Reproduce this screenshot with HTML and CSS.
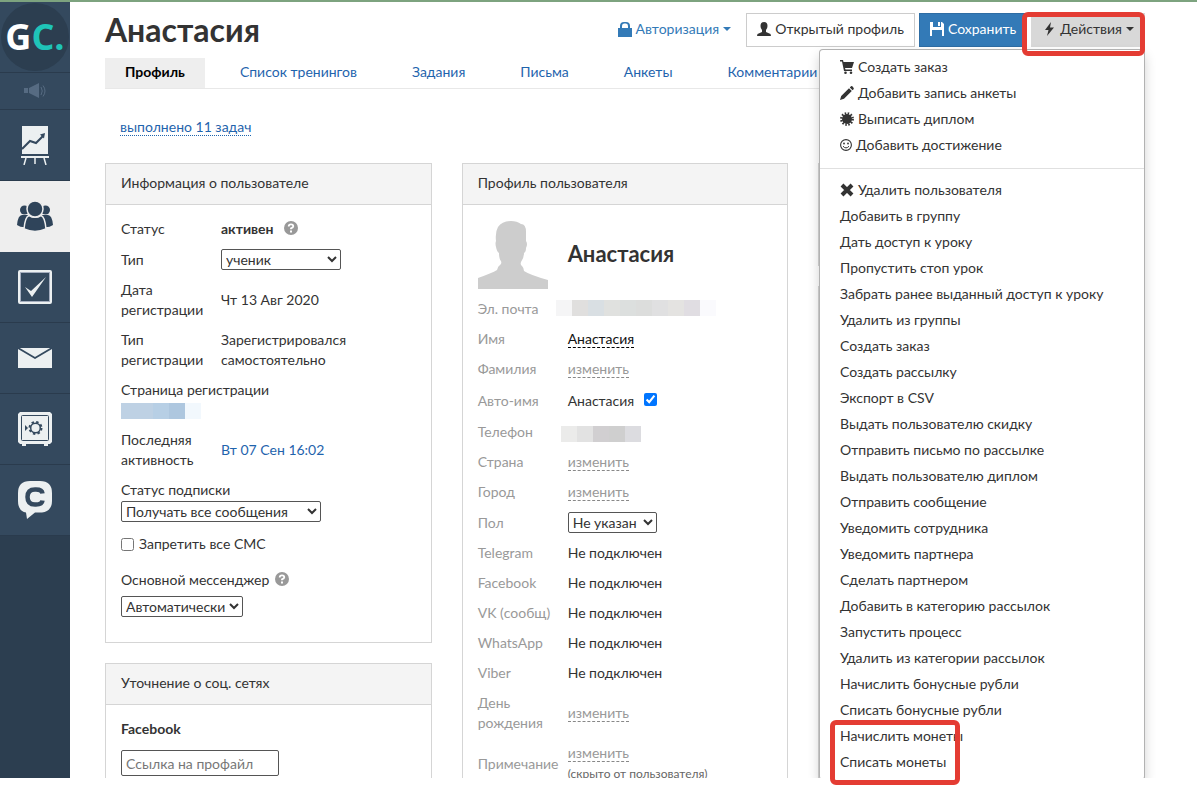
FILE: index.html
```html
<!DOCTYPE html>
<html lang="ru">
<head>
<meta charset="utf-8">
<meta name="viewport" content="width=device-width, initial-scale=1">
<title>Анастасия — профиль</title>
<link rel="stylesheet" href="styles.css">
</head>
<body>
<div class="app">
  <nav class="sidebar" aria-label="Главное меню">
    <a class="logo" href="#"><span class="logo-circle"><span>G<span class="logo-accent">C.</span></span></span></a>
    <a class="side-item side-small" href="#" aria-label="Новости">
      <svg width="22" height="16" viewBox="0 0 22 16" fill="#566b82"><path d="M0 5h4v5H0zM5 5l10-5v15l-10-5z"/><path d="M17 4q2.500 4 0 8M19 2.500q4 5.500 0 11" fill="none" stroke="#566b82"/></svg>
    </a>
    <a class="side-item" href="#" aria-label="Обучение">
      <svg width="28" height="40" viewBox="0 0 28 40"><path fill="#ecf0f1" d="M1 1h26v28H1zM0 31h28v2H0z"/><path d="M5 33l-2 7M14 33v6M23 33l2 7" stroke="#ecf0f1" stroke-width="1.500"/><path d="M1 24l8-8 6 2 7-7" fill="none" stroke="#34495e" stroke-width="2"/><path fill="#34495e" d="M19 9.500l5-1.500-1 5.500z"/></svg>
    </a>
    <a class="side-item side-active" href="#" aria-label="Пользователи">
      <svg width="36" height="31" viewBox="0 0 36 31" fill="#2f445a"><circle cx="7.500" cy="9" r="4.500"/><circle cx="28.500" cy="9" r="4.500"/><path d="M0 24Q1 14 5 14h6v12Q4 27 0 24zM36 24Q35 14 31 14h-6v12q7 1 11-2z"/><g stroke="#eee" stroke-width="1.500"><path d="M7 28q1-12 5-13.500 6 3.500 12 0Q28 16 29 28q-11 5-22 0z"/><circle cx="18" cy="8" r="8"/></g></svg>
    </a>
    <a class="side-item" href="#" aria-label="Задачи">
      <svg width="34" height="34" viewBox="0 0 34 34"><rect x="1" y="1" width="32" height="32" rx="1" fill="none" stroke="#ecf0f1" stroke-width="2"/><rect x="2.500" y="2.500" width="29" height="29" fill="none" stroke="#a5aebf"/><path fill="#ecf0f1" d="M7 17l6 4L28 7 14 27z"/></svg>
    </a>
    <a class="side-item" href="#" aria-label="Сообщения">
      <svg width="34" height="20" viewBox="0 0 34 20"><path fill="#ecf0f1" d="M1 0h32l1 1v19H0V1z"/><path d="M0 0l17 10L34 0" fill="none" stroke="#34495e" stroke-width="1.800"/></svg>
    </a>
    <a class="side-item" href="#" aria-label="Продажи">
      <svg width="34" height="34" viewBox="0 0 34 34"><path fill="#ecf0f1" d="M2 0h30l2 2v28l-2 2h-2v2h-4v-2H8v2H4v-2H2l-2-2V2z"/><rect x="3.500" y="3.500" width="27" height="25" rx="1" fill="none" stroke="#34495e"/><circle cx="17.500" cy="16" r="4.800" fill="none" stroke="#34495e" stroke-width="1.500"/><circle cx="17.500" cy="16" r="6" fill="none" stroke="#34495e" stroke-width="2" stroke-dasharray="2.400 2.310"/><path fill="#34495e" d="M7 13l3 3-3 3z"/></svg>
    </a>
    <a class="side-item" href="#" aria-label="Чат">
      <svg width="34" height="38" viewBox="0 0 34 38"><path fill="#ecf0f1" d="M12 0h10q12 0 12 12v8q0 10-10 11.500h-7L9 38l-1-6.500Q0 30 0 20v-8Q0 0 12 0z"/><path d="M24.500 12.500Q24 8.500 18 8.500h-1q-7.500 0-7.500 7.500t7.500 7.500h1q6 0 6.500-4" fill="none" stroke="#34495e" stroke-width="4.500"/></svg>
    </a>
  </nav>

  <main class="main">
    <header class="header">
      <h1 class="title">Анастасия</h1>
      <div class="toolbar">
        <button class="btn btn-link" type="button">
          <svg width="14" height="15" viewBox="0 0 14 15"><path fill="currentColor" d="M0 6h2V4q0-4 4-4h2q4 0 4 4v2h2v9H0zM4 6h6V4Q10 1.500 8 1.500H6Q4 1.500 4 4z"/></svg>
          Авторизация<span class="caret"></span>
        </button>
        <button class="btn btn-default" type="button">
          <svg width="14" height="14" viewBox="0 0 14 14"><path fill="currentColor" d="M7 0q3.500 0 3.500 4 0 2.500-1.500 4v2l4.500 2 .5 2H0l.5-2L5 10V8Q3.500 6.500 3.500 4 3.500 0 7 0z"/></svg>
          Открытый профиль
        </button>
        <button class="btn btn-primary" type="button">
          <svg width="14" height="14" viewBox="0 0 14 14"><path fill="currentColor" d="M0 0h3v5h8V0h1l2 2v12h-2V8H2v6H0zM8 0h2v4H8z"/></svg>
          Сохранить
        </button>
        <div class="dropdown">
          <button class="btn btn-open" type="button" aria-expanded="true">
            <svg width="14" height="14" viewBox="0 0 14 14"><path fill="currentColor" d="M9 0L3 8h3.500L5 14l7-8.500H8z"/></svg>
            Действия<span class="caret"></span>
          </button>
          <ul class="menu">
            <li><a href="#"><svg width="14" height="14" viewBox="0 0 14 14"><path fill="currentColor" d="M0 0h3l.5 2H14l-2 6H5l.5 1.500H12V11H4L2 1.500H0z"/><circle cx="5.500" cy="12.700" r="1.300" fill="currentColor"/><circle cx="11" cy="12.700" r="1.300" fill="currentColor"/></svg>Создать заказ</a></li>
            <li><a href="#"><svg width="14" height="14" viewBox="0 0 14 14"><path fill="currentColor" d="M0 14l1.200-4L9 2.200 11.800 5 4 12.800zM9.800 1.400L11 .2q1-.5 2 .8t.8 2l-1.200 1.200z"/></svg>Добавить запись анкеты</a></li>
            <li><a href="#"><svg width="14" height="14" viewBox="0 0 14 14"><circle cx="7" cy="7" r="5" fill="currentColor"/><circle cx="7" cy="7" r="5.700" fill="none" stroke="currentColor" stroke-width="2.400" stroke-dasharray="1.500 1.484"/></svg>Выписать диплом</a></li>
            <li><a href="#"><svg width="12" height="12" viewBox="0 0 12 12"><circle cx="6" cy="6" r="5.400" fill="none" stroke="currentColor" stroke-width="1.100"/><circle cx="4" cy="4.500" r=".9" fill="currentColor"/><circle cx="8" cy="4.500" r=".9" fill="currentColor"/><path d="M3 7.200q3 3.400 6 0" fill="none" stroke="currentColor"/></svg>Добавить достижение</a></li>
            <li class="menu-divider"></li>
            <li><a href="#"><svg width="14" height="14" viewBox="0 0 14 14"><path d="M2 2l10 10M12 2L2 12" stroke="currentColor" stroke-width="4"/></svg>Удалить пользователя</a></li>
            <li><a href="#">Добавить в группу</a></li>
            <li><a href="#">Дать доступ к уроку</a></li>
            <li><a href="#">Пропустить стоп урок</a></li>
            <li><a href="#">Забрать ранее выданный доступ к уроку</a></li>
            <li><a href="#">Удалить из группы</a></li>
            <li><a href="#">Создать заказ</a></li>
            <li><a href="#">Создать рассылку</a></li>
            <li><a href="#">Экспорт в CSV</a></li>
            <li><a href="#">Выдать пользователю скидку</a></li>
            <li><a href="#">Отправить письмо по рассылке</a></li>
            <li><a href="#">Выдать пользователю диплом</a></li>
            <li><a href="#">Отправить сообщение</a></li>
            <li><a href="#">Уведомить сотрудника</a></li>
            <li><a href="#">Уведомить партнера</a></li>
            <li><a href="#">Сделать партнером</a></li>
            <li><a href="#">Добавить в категорию рассылок</a></li>
            <li><a href="#">Запустить процесс</a></li>
            <li><a href="#">Удалить из категории рассылок</a></li>
            <li><a href="#">Начислить бонусные рубли</a></li>
            <li><a href="#">Списать бонусные рубли</a></li>
            <li><a href="#">Начислить монеты</a></li>
            <li><a href="#">Списать монеты</a></li>
          </ul>
        </div>
      </div>
    </header>

    <nav class="tabs" aria-label="Разделы профиля">
      <a class="tab tab-active" href="#">Профиль</a>
      <a class="tab" href="#">Список тренингов</a>
      <a class="tab" href="#">Задания</a>
      <a class="tab" href="#">Письма</a>
      <a class="tab" href="#">Анкеты</a>
      <a class="tab" href="#">Комментарии</a>
    </nav>

    <p class="tasks"><a href="#">выполнено 11 задач</a></p>

    <div class="columns">
      <div class="column">
        <section class="panel">
          <h2 class="panel-head">Информация о пользователе</h2>
          <div class="panel-body">
            <table class="info">
              <tr><th>Статус</th><td><b>активен</b><span class="help"><svg width="14" height="14" viewBox="0 0 14 14"><circle cx="7" cy="7" r="7" fill="#999"/><path d="M4.700 5.500Q4.700 3.300 7 3.300t2.300 2Q9.300 6.500 7 7.300v1" fill="none" stroke="#fff" stroke-width="1.800"/><path fill="#fff" d="M6 9.500h2v2H6z"/></svg></span></td></tr>
              <tr><th><label for="type">Тип</label></th><td><select id="type" class="select-md"><option>ученик</option></select></td></tr>
              <tr><th>Дата регистрации</th><td>Чт 13 Авг 2020</td></tr>
              <tr><th>Тип регистрации</th><td>Зарегистрировался самостоятельно</td></tr>
              <tr><th colspan="2">Страница регистрации<span class="mask mask-page"></span></th></tr>
              <tr><th>Последняя активность</th><td><a href="#">Вт 07 Сен 16:02</a></td></tr>
            </table>
            <div class="field">
              <label for="sub">Статус подписки</label>
              <select id="sub" class="select-lg"><option>Получать все сообщения</option></select>
            </div>
            <label class="check"><input type="checkbox">Запретить все СМС</label>
            <div class="field field-spaced">
              <span><label for="messenger">Основной мессенджер</label><span class="help help-near"><svg width="14" height="14" viewBox="0 0 14 14"><circle cx="7" cy="7" r="7" fill="#999"/><path d="M4.700 5.500Q4.700 3.300 7 3.300t2.300 2Q9.300 6.500 7 7.300v1" fill="none" stroke="#fff" stroke-width="1.800"/><path fill="#fff" d="M6 9.500h2v2H6z"/></svg></span></span>
              <select id="messenger"><option>Автоматически</option></select>
            </div>
          </div>
        </section>
        <section class="panel">
          <h2 class="panel-head">Уточнение о соц. сетях</h2>
          <div class="panel-body social">
            <label for="fb"><b>Facebook</b></label>
            <input id="fb" class="text" type="text" placeholder="Ссылка на профайл">
          </div>
        </section>
      </div>

      <div class="column">
        <section class="panel">
          <h2 class="panel-head">Профиль пользователя</h2>
          <div class="panel-body">
            <table class="info profile">
              <tr><th><svg class="avatar" width="70" height="70" viewBox="0 0 70 70"><path fill="#cdcdcd" d="M0 70V59q14-5 19-8 1-4 3-5 2-1 1-4-2-2-2-8-2-1-3-6-1-4 0-6-1-9 2-14 4-6 13-6 6 0 10 3 5 0 5 8v9q2 3 0 7 0 4-2 5 0 5-3 9-1 3 1 4 2 2 2 5 6 4 24 9v9z"/></svg></th><td class="name">Анастасия</td></tr>
              <tr><th>Эл. почта</th><td><span class="mask mask-mail"></span></td></tr>
              <tr><th>Имя</th><td><a class="edit edit-set" href="#">Анастасия</a></td></tr>
              <tr><th>Фамилия</th><td><a class="edit" href="#">изменить</a></td></tr>
              <tr class="auto"><th><label for="auto">Авто-имя</label></th><td>Анастасия<input id="auto" type="checkbox" checked></td></tr>
              <tr><th>Телефон</th><td><span class="mask mask-phone"></span></td></tr>
              <tr><th>Страна</th><td><a class="edit" href="#">изменить</a></td></tr>
              <tr><th>Город</th><td><a class="edit" href="#">изменить</a></td></tr>
              <tr><th><label for="sex">Пол</label></th><td><select id="sex" class="select-sm"><option>Не указан</option></select></td></tr>
              <tr><th>Telegram</th><td>Не подключен</td></tr>
              <tr><th>Facebook</th><td>Не подключен</td></tr>
              <tr><th>VK (сообщ)</th><td>Не подключен</td></tr>
              <tr><th>WhatsApp</th><td>Не подключен</td></tr>
              <tr><th>Viber</th><td>Не подключен</td></tr>
              <tr><th>День рождения</th><td><a class="edit" href="#">изменить</a></td></tr>
              <tr><th>Примечание</th><td><a class="edit" href="#">изменить</a><br><small>(скрыто от пользователя)</small></td></tr>
            </table>
          </div>
        </section>
      </div>

      <div class="column">
        <section class="panel panel-short"><div class="panel-head"></div></section>
        <section class="panel panel-long"><div class="panel-head"></div></section>
      </div>
    </div>
  </main>
  <div class="mark mark-button"></div>
  <div class="mark mark-items"></div>
</div>
</body>
</html>
```
FILE: styles.css
```css
* { box-sizing: border-box; }
body {
  margin: 0;
  background: #fff;
  color: #333;
  font: 14px/20px Lato, Roboto, "Liberation Sans", sans-serif;
}
a { color: #1f64ad; text-decoration: none; }
svg { flex: none; }
h1, h2, p, ul { margin: 0; padding: 0; }
ul { list-style: none; }
button, select, input { font: inherit; color: inherit; }

.app {
  position: relative;
  display: flex;
  height: 100vh;
  padding-bottom: 22px;
  overflow: hidden;
  border-top: 2px solid #7da37f;
}

/* Sidebar */
.sidebar { width: 70px; flex: none; background: #2c3e50; }
.logo, .side-item {
  display: flex;
  align-items: center;
  justify-content: center;
  height: 71px;
  background: #34495e;
  border-bottom: 1px solid #2a3b4d;
}
.side-small { height: 37px; }
.side-active { background: #eee; border-color: #eee; }
.logo-circle {
  display: flex;
  align-items: center;
  justify-content: center;
  width: 68px;
  height: 68px;
  border-radius: 50%;
  background: #2c3e50;
  color: #fff;
  font: 700 36px/40px "Open Sans", sans-serif;
}
.logo-accent { color: #1fc4b8; }

/* Header */
.main { flex: 1; min-width: 0; padding: 0 52px 0 35px; overflow: hidden; }
.header { display: flex; justify-content: space-between; align-items: flex-start; height: 56px; padding-top: 11px; }
.title { font-size: 32px; line-height: 34px; font-weight: 700; }
.toolbar { display: flex; gap: 4px; }
.btn {
  display: flex;
  align-items: center;
  gap: 4px;
  height: 34px;
  padding: 0 10px 2px;
  border: 1px solid transparent;
  background: none;
  white-space: nowrap;
}
.btn-link { color: #337ab7; }
.btn-default { background: #fff; border-color: #ccc; }
.btn-primary { background: #337ab7; border-color: #2e6da4; color: #fff; }
.btn-open { background: #d8d8d8; }
.caret { border: 4px solid transparent; border-top-color: currentColor; border-bottom: 0; }
.dropdown { position: relative; }
.menu {
  position: absolute;
  z-index: 2;
  top: 36px;
  right: 0;
  width: 326px;
  padding: 4px 0;
  background: #fff;
  border: 1px solid rgba(0, 0, 0, 0.3);
  border-radius: 4px;
  box-shadow: 0 6px 12px rgba(0, 0, 0, 0.18);
}
.menu a { display: flex; align-items: center; gap: 4px; padding: 3px 20px; color: #333; }
.menu-divider { height: 1px; margin: 10px 0 8px; background: #e0e0e0; }

/* Tabs */
.tabs { display: flex; gap: 15px; border-bottom: 1px solid #e8e8e8; }
.tab { padding: 4px 20px 6px; white-space: nowrap; }
.tab-active { background: #eee; color: #000; font-weight: 700; }
.tasks { padding: 28px 15px 26px; }
.tasks a { border-bottom: 1px dotted #1f64ad; }

/* Panels */
.columns { display: grid; grid-template-columns: repeat(3, minmax(0, 1fr)); gap: 30px; }
.column { display: flex; flex-direction: column; gap: 20px; }
.panel { border: 1px solid #d5d5d5; }
.panel-head {
  min-height: 41px;
  padding: 9px 15px 11px;
  background: #f4f4f4;
  border-bottom: 1px solid #d5d5d5;
  font-size: 14px;
  line-height: 20px;
  font-weight: 400;
}
.panel-body { padding: 9px 15px 25px; }
.panel-short { height: 103px; }
.panel-long { height: 600px; }
.info { width: 100%; border-collapse: collapse; }
.info th { width: 100px; padding: 5px 16px 5px 0; text-align: left; font-weight: 400; }
.info td { padding: 5px 0; }
.profile th { width: 90px; padding-right: 5px; color: #999; }
.profile .name { font-size: 22px; font-weight: 700; }
.profile .auto td, .profile .auto th { padding: 7px 0 5px; }
.auto input { margin: 0 0 0 10px; }
.avatar { display: block; }
.help { display: inline-flex; margin-left: 10px; vertical-align: -1px; }
.help-near { margin-left: 6px; }
.edit { color: #999; border-bottom: 1px dashed #888; }
.edit-set { color: #111; border-color: #000; }
small { font-size: 12px; color: #666; }

select {
  display: block;
  height: 21px;
  padding: 0;
  background: #fff;
  border: 1px solid #555;
  border-radius: 2px;
}
.select-sm { width: 89px; }
.select-md { width: 120px; }
.select-lg { width: 200px; }
input[type="checkbox"] { width: 13px; height: 13px; }
.field { display: flex; flex-direction: column; align-items: flex-start; gap: 1px; padding-top: 5px; }
.check { display: flex; align-items: center; gap: 5px; margin-top: 12px; }
.check input { margin: 0; }
.field-spaced { gap: 6px; padding-top: 16px; }
.social { display: flex; flex-direction: column; align-items: flex-start; gap: 11px; padding-top: 14px; }
.text { width: 158px; height: 26px; padding: 0 4px; border: 1px solid #555; border-radius: 2px; }
.text::placeholder { color: #777; }

/* Hidden personal data */
.mask { display: block; height: 16px; }
.mask-page {
  width: 80px;
  margin: 3px 0 1px;
  background: linear-gradient(90deg, #bed1e4 0 32px, #b7cfe5 32px 48px, #aec7df 48px 64px, #f2f8fd 64px);
}
.mask-mail {
  width: 160px;
  margin: -3px 0 0 -12px;
  background: linear-gradient(90deg, #f5f5f6 0 16px, #e0dfde 16px 32px, #d9dfe3 32px 48px, #e0e1df 48px 64px, #dcdfde 64px 80px, #dcdddc 80px 96px, #e0e0e1 96px 112px, #e4e3e1 112px 128px, #e0dde2 128px 144px, #fafafd 144px);
}
.mask-phone {
  width: 80px;
  margin: 5px 0 0 -7px;
  background: linear-gradient(90deg, #ebebea 0 16px, #e2e2e2 16px 32px, #d1cfd1 32px 48px, #cfcfcf 48px 64px, #dcdce0 64px);
}

/* Highlight frames */
.mark { position: absolute; z-index: 3; border: 5px solid #e43c33; border-radius: 6px; pointer-events: none; }
.mark-button { top: 10px; right: 52px; width: 123px; height: 44px; }
.mark-items { top: 718px; right: 237px; width: 130px; height: 65px; }
```
